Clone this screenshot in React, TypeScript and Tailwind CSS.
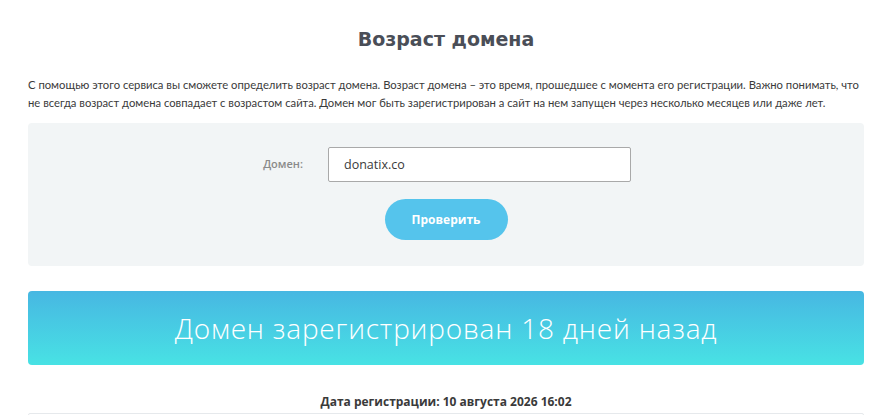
export default function App() {
    return (
        <div className="min-h-screen bg-white px-[28px] text-[#3d4148]" style={{ fontFamily: '"Open Sans", "Noto Sans", sans-serif' }}>
            {/* Title */}
            <h1 className="pt-[26px] text-center text-[19px] font-bold leading-[26px] text-[#4a4e57]" style={{ fontFamily: '"DejaVu Sans", sans-serif' }}>
                Возраст домена
            </h1>

            {/* Description */}
            <p className="mt-[24px] text-[11.25px] leading-[18px] text-[#3a3a3a]" style={{ fontFamily: 'Lato, sans-serif' }}>
                С помощью этого сервиса вы сможете определить возраст домена. Возраст домена – это время, прошедшее с момента его регистрации. Важно понимать, что не всегда возраст домена совпадает с возрастом сайта. Домен мог быть зарегистрирован а сайт на нем запущен через несколько месяцев или даже лет.
            </p>

            {/* Form */}
            <form className="mt-[11px] flex h-[143px] flex-col items-center rounded-[4px] bg-[#f2f5f6] pt-[24px]">
                <div className="flex items-center">
                    <label htmlFor="domain" className="w-[67px] pr-[25px] text-right text-[11px] font-semibold text-[#8a8a8a]">Домен:</label>
                    <input
                        id="domain"
                        type="text"
                        defaultValue="donatix.co"
                        className="h-[35px] w-[303px] rounded-[2px] border border-[#a9a9a9] bg-white px-[15px] text-[12.5px] text-[#3a3a3a] outline-none"
                    />
                </div>
                <button
                    type="button"
                    className="mt-[17px] h-[41px] w-[123px] rounded-full bg-[#55c4ec] text-[12px] font-bold text-white"
                >
                    Проверить
                </button>
            </form>

            {/* Result */}
            <div className="mt-[25px] flex h-[74px] items-center justify-center rounded-[4px] bg-gradient-to-b from-[#47b7e2] to-[#48e2e4]">
                <span className="text-[28px] font-light tracking-[0.8px] text-white" style={{ fontFamily: '"Open Sans", sans-serif' }}>Домен зарегистрирован 18 дней назад</span>
            </div>

            <div className="mt-[28px] text-center text-[12px] font-bold text-[#3a3a3a]">
                Дата регистрации: 10 августа 2026 16:02
            </div>
            <div className="mt-[2px] h-[20px] rounded-t-[2px] border border-[#e6e9ec]" />
        </div>
    );
}
